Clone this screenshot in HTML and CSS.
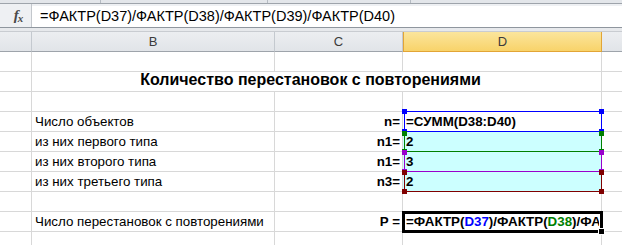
FILE: index.html
```html
<!doctype html>
<html>
<head>
<meta charset="utf-8">
<title>Количество перестановок с повторениями</title>
<link rel="stylesheet" href="styles.css">
</head>
<body>
<div class="ribbon-edge"><span class="sep s1"></span><span class="sep s2"></span><span class="sep s3"></span></div>
<div class="formula-bar">
    <div class="fx"><span class="f">f</span><span class="x">x</span></div>
    <div class="formula">=ФАКТР(D37)/ФАКТР(D38)/ФАКТР(D39)/ФАКТР(D40)</div>
</div>
<div class="bar-gap"></div>

<div class="sheet">
    <div class="hd"></div>
    <div class="hd">B</div>
    <div class="hd">C</div>
    <div class="hd sel">D</div>
    <div class="hd last"></div>

    <div class="c"></div><div class="c"></div><div class="c"></div><div class="c"></div><div class="c last"></div>

    <div class="c"></div>
    <div class="c title">Количество перестановок с повторениями</div>
    <div class="c last"></div>

    <div class="c"></div><div class="c"></div><div class="c"></div><div class="c"></div><div class="c last"></div>

    <div class="c"></div>
    <div class="c txt">Число объектов</div>
    <div class="c lbl">n=</div>
    <div class="c val ref"><span class="box blue"><i class="h tl"></i><i class="h tr"></i><i class="h bl"></i><i class="h br"></i></span>=СУММ(D38:D40)</div>
    <div class="c last"></div>

    <div class="c"></div>
    <div class="c txt">из них первого типа</div>
    <div class="c lbl">n1=</div>
    <div class="c val fill ref"><span class="box green"><i class="h tl"></i><i class="h tr"></i><i class="h bl"></i><i class="h br"></i></span>2</div>
    <div class="c last"></div>

    <div class="c"></div>
    <div class="c txt">из них второго типа</div>
    <div class="c lbl">n1=</div>
    <div class="c val fill ref"><span class="box purple"><i class="h tl"></i><i class="h tr"></i><i class="h bl"></i><i class="h br"></i></span>3</div>
    <div class="c last"></div>

    <div class="c"></div>
    <div class="c txt">из них третьего типа</div>
    <div class="c lbl">n3=</div>
    <div class="c val fill ref"><span class="box red"><i class="h tl"></i><i class="h tr"></i><i class="h bl"></i><i class="h br"></i></span>2</div>
    <div class="c last"></div>

    <div class="c"></div><div class="c"></div><div class="c"></div><div class="c"></div><div class="c last"></div>

    <div class="c"></div>
    <div class="c txt">Число перестановок с повторениями</div>
    <div class="c lbl">P =</div>
    <div class="c val active"><span class="cursor"><i class="handle"></i></span><span class="edit">=ФАКТР(<span class="r-blue">D37</span>)/ФАКТР(<span class="r-green">D38</span>)/ФАКТР(D39)/ФАКТР(D40)</span></div>
    <div class="c last"></div>

    <div class="c"></div><div class="c"></div><div class="c"></div><div class="c"></div><div class="c last"></div>
</div>
</body>
</html>
```

FILE: styles.css
```css
html, body{
    margin: 0;
    padding: 0;
    background: #fff;
    overflow: hidden;
}
body{
    font-family: "Liberation Sans", Arial, sans-serif;
    width: 622px;
    height: 245px;
}

.ribbon-edge{
    position: relative;
    height: 3px;
    background: #e3e6ea;
    border-bottom: 1px solid #9ea4ab;
}
.sep{
    position: absolute;
    top: 0;
    width: 1px;
    height: 3px;
    background: #b6bcc3;
}
.s1{ left: 100px; }
.s2{ left: 267px; }
.s3{ left: 410px; }

.formula-bar{
    display: flex;
    height: 23px;
    background: #eef0f3;
    border-bottom: 1px solid #8f969e;
}
.fx{
    width: 32px;
    background: #eef0f3;
    border-right: 1px solid #c3c7cc;
    color: #4a4a4a;
    font-family: "Liberation Serif", serif;
    font-style: italic;
    font-weight: bold;
    display: flex;
    justify-content: center;
    align-items: center;
    padding-left: 6px;
    box-sizing: border-box;
}
.fx .f{ font-size: 15px; }
.fx .x{ font-size: 11px; margin-top: 4px; margin-left: -1px; }
.formula{
    flex: 1;
    margin-top: 2px;
    background: #fff;
    font-size: 14.5px;
    padding-left: 8px;
    line-height: 21px;
    color: #000;
    white-space: nowrap;
    overflow: hidden;
}

.bar-gap{
    height: 3px;
    background: #e7e9ec;
    border-bottom: 1px solid #c9ccd1;
}

.sheet{
    display: grid;
    grid-template-columns: 32px 243px 128px 199px 1fr;
    grid-auto-rows: 20px;
    font-size: 13.33px;
}
.hd{
    background: linear-gradient(#eceef1, #e1e4e8);
    border-right: 1px solid #c4c9cf;
    border-bottom: 1px solid #9ea4ab;
    color: #3b3b3b;
    font-size: 13px;
    display: flex;
    align-items: center;
    justify-content: center;
    box-sizing: border-box;
}
.hd.sel{
    background: linear-gradient(#fbe59c, #f8d36a);
    border-right: 1px solid #e2a536;
    border-bottom: 1px solid #e2a536;
    border-left: 1px solid #e2a536;
    color: #3b3b3b;
}
.hd.last{ border-right: none; }

.c{
    border-right: 1px solid #d8d8d8;
    border-bottom: 1px solid #d8d8d8;
    box-sizing: border-box;
    display: flex;
    align-items: flex-end;
    padding: 0 2px 2px;
    white-space: nowrap;
    color: #000;
}
.c.last{ border-right: none; }

.title{
    grid-column: 2 / 5;
    justify-content: center;
    font-size: 16px;
    font-weight: bold;
    padding-bottom: 2px;
    padding-right: 14px;
}
.txt{ padding-left: 3px; }
.lbl{
    justify-content: flex-end;
    font-weight: bold;
    padding-right: 2px;
}
.val{
    position: relative;
    font-weight: bold;
    padding-left: 3px;
}
.fill{ background: #ccffff; }

.box{
    position: absolute;
    top: -1px;
    left: 1px;
    right: -1px;
    bottom: -1px;
    border: 1px solid;
    z-index: 1;
}
.blue{ border-color: #0000ff; color: #0000ff; }
.green{ border-color: #008000; color: #008000; }
.purple{ border-color: #9900cc; color: #9900cc; }
.red{ border-color: #800000; color: #800000; }
.green, .purple, .red{ border-top: none; top: 0; }

.h{
    position: absolute;
    width: 5px;
    height: 5px;
    background: currentColor;
}
.h.tl{ left: -3px; top: -3px; }
.h.tr{ right: -3px; top: -3px; }
.h.bl{ left: -3px; bottom: -3px; }
.h.br{ right: -3px; bottom: -3px; }
.green .h.tl, .green .h.tr, .purple .h.tl, .purple .h.tr, .red .h.tl, .red .h.tr{ top: -2px; }
.blue .h{ z-index: 2; }
.green .h.tl, .green .h.tr{ top: -1px; }

.active{
    overflow: visible;
    padding-left: 3px;
}
.edit{
    display: block;
    overflow: hidden;
    width: 195px;
}
.cursor{
    position: absolute;
    top: -1px;
    left: -1px;
    right: -2px;
    bottom: -2px;
    border: 3px solid #000;
    box-sizing: border-box;
}
.handle{
    position: absolute;
    right: -5px;
    bottom: -5px;
    width: 5px;
    height: 5px;
    background: #000;
    border: 1px solid #fff;
}
.r-blue{ color: #0000ff; }
.r-green{ color: #008000; }
```
